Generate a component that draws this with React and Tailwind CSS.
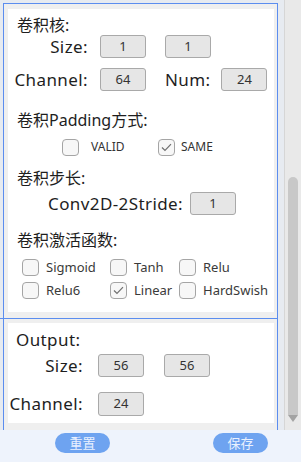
import React from "react"

function ValueBox({ value, className = "" }) {
  return (
    <div
      className={
        "h-[23px] w-[46px] flex items-center justify-center rounded-[3px] border border-[#a9a9a9] bg-[#e6e6e6] text-[13px] tracking-normal text-[#333] " +
        className
      }
    >
      {value}
    </div>
  )
}

function Check({ checked }) {
  return (
    <span className="w-[17px] h-[17px] shrink-0 rounded-[4px] border border-[#a5a5a5] bg-[#f7f7f7] flex items-center justify-center">
      {checked && (
        <svg width="11" height="9" viewBox="0 0 11 9">
          <path d="M1 4.5 L4 7.5 L10 1.2" stroke="#707070" strokeWidth="1.2" fill="none" />
        </svg>
      )}
    </span>
  )
}

function Option({ label, checked, className = "" }) {
  return (
    <div className={"flex items-center " + className}>
      <Check checked={checked} />
      <span className="ml-[7px] text-[13px] leading-[17px] text-[#3a3a3a]">{label}</span>
    </div>
  )
}

function Title({ children, className = "" }) {
  return (
    <div className={"h-[20px] pl-[9px] text-[16px] leading-[20px] text-[#1e1e1e] " + className}>{children}</div>
  )
}

export default function App() {
  return (
    <div className="w-[301px] h-[462px] bg-[#eef3fc] overflow-hidden font-['Noto_Sans','Noto_Sans_CJK_SC',sans-serif]">
      <div className="flex h-[430px]">
        <div className="w-[284px] bg-[#e7ebf1] pt-[3px] pl-[3px]">
          <div className="w-[275px] h-[427px] border-l border-t border-r border-[#5b8def] bg-[#efefef] pt-[5px] pl-[4px]">
            {/* conv settings */}
            <div className="w-[266px] h-[303px] bg-white flex flex-col">
              <Title className="mt-[6px]">卷积核:</Title>

              <div className="flex items-center h-[23px] text-[17px] tracking-[0.4px] text-[#1e1e1e]">
                <span className="w-[80px] text-right">Size:</span>
                <ValueBox value="1" className="ml-[12px]" />
                <ValueBox value="1" className="ml-[19px]" />
              </div>

              <div className="flex items-center h-[23px] mt-[10px] text-[17px] tracking-[0.4px] text-[#1e1e1e]">
                <span className="w-[80px] text-right">Channel:</span>
                <ValueBox value="64" className="ml-[12px]" />
                <span className="ml-[19px]">Num:</span>
                <ValueBox value="24" className="ml-[11px]" />
              </div>

              <Title className="mt-[19px]">卷积Padding方式:</Title>

              <div className="flex items-center h-[18px] mt-[8px] pl-[54px]">
                <div className="w-[96px] flex items-center">
                  <Check />
                  <span className="ml-[12px] text-[12px] text-[#333]">VALID</span>
                </div>
                <div className="flex items-center">
                  <Check checked />
                  <span className="ml-[6px] text-[12px] text-[#333]">SAME</span>
                </div>
              </div>

              <Title className="mt-[12px]">卷积步长:</Title>

              <div className="flex items-center h-[21px] mt-[5px] text-[17px] tracking-[0.4px] text-[#1e1e1e]">
                <span className="w-[175px] text-right">Conv2D-2Stride:</span>
                <ValueBox value="1" className="ml-[7px] h-[21px]" />
              </div>

              <Title className="mt-[16px]">卷积激活函数:</Title>

              <div className="grid grid-cols-[88px_69px_1fr] pl-[14px] mt-[9px] gap-y-[6px]">
                <Option label="Sigmoid" />
                <Option label="Tanh" />
                <Option label="Relu" />
                <Option label="Relu6" />
                <Option label="Linear" checked />
                <Option label="HardSwish" />
              </div>
            </div>

            <div className="-ml-[8px] mt-[6px] w-[277px] h-px bg-[#5b8def]"></div>

            {/* output */}
            <div className="w-[266px] h-[100px] mt-[4px] bg-white flex flex-col text-[17px] tracking-[0.4px] text-[#1e1e1e]">
              <div className="mt-[7px] h-[20px] leading-[20px] pl-[8px]">Output:</div>
              <div className="flex items-center h-[23px] mt-[4px]">
                <span className="w-[75px] text-right">Size:</span>
                <ValueBox value="56" className="ml-[15px]" />
                <ValueBox value="56" className="ml-[20px]" />
              </div>
              <div className="flex items-center h-[24px] mt-[15px]">
                <span className="w-[75px] text-right">Channel:</span>
                <ValueBox value="24" className="ml-[15px] h-[24px]" />
              </div>
            </div>
          </div>
        </div>

        {/* scrollbar */}
        <div className="w-[17px] border-l border-[#d6d6d6] bg-[#e9e9e9] flex flex-col items-center">
          <div className="mt-[177px] w-[10px] h-[238px] rounded-t-full bg-[#c8c8c8]"></div>
          <div className="w-0 h-0 border-l-[5px] border-r-[5px] border-t-[7px] border-l-transparent border-r-transparent border-t-[#a3a3a3]"></div>
        </div>
      </div>

      <div className="flex pt-[3px] pl-[55px]">
        <button className="w-[55px] h-[20px] rounded-full bg-[#6ea3f0] text-[13px] leading-[20px] text-[#eaf1ff]">重置</button>
        <button className="ml-[103px] w-[55px] h-[20px] rounded-full bg-[#6ea3f0] text-[13px] leading-[20px] text-[#eaf1ff]">保存</button>
      </div>
    </div>
  )
}
